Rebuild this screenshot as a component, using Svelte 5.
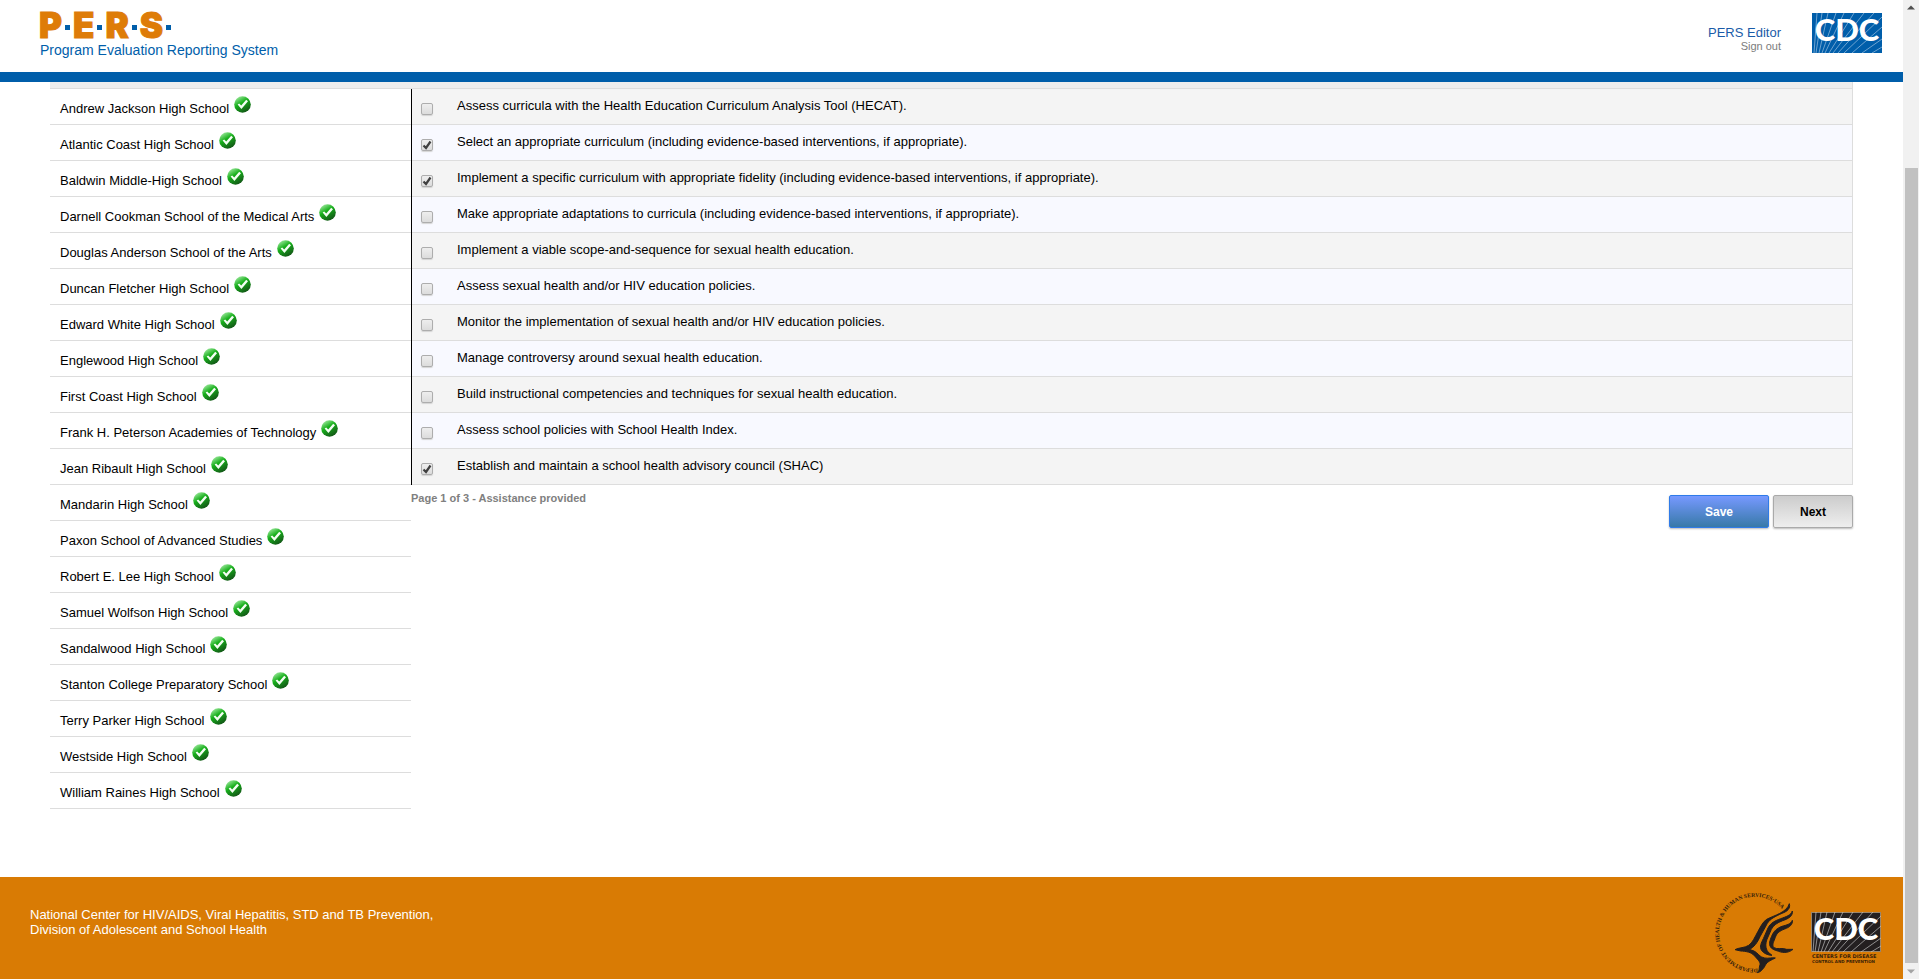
<script>
  const schools = [
    'Andrew Jackson High School', 'Atlantic Coast High School', 'Baldwin Middle-High School',
    'Darnell Cookman School of the Medical Arts', 'Douglas Anderson School of the Arts',
    'Duncan Fletcher High School', 'Edward White High School', 'Englewood High School',
    'First Coast High School', 'Frank H. Peterson Academies of Technology',
    'Jean Ribault High School', 'Mandarin High School', 'Paxon School of Advanced Studies',
    'Robert E. Lee High School', 'Samuel Wolfson High School', 'Sandalwood High School',
    'Stanton College Preparatory School', 'Terry Parker High School', 'Westside High School',
    'William Raines High School'
  ];
  let items = $state([
    { text: 'Assess curricula with the Health Education Curriculum Analysis Tool (HECAT).', done: false },
    { text: 'Select an appropriate curriculum (including evidence-based interventions, if appropriate).', done: true },
    { text: 'Implement a specific curriculum with appropriate fidelity (including evidence-based interventions, if appropriate).', done: true },
    { text: 'Make appropriate adaptations to curricula (including evidence-based interventions, if appropriate).', done: false },
    { text: 'Implement a viable scope-and-sequence for sexual health education.', done: false },
    { text: 'Assess sexual health and/or HIV education policies.', done: false },
    { text: 'Monitor the implementation of sexual health and/or HIV education policies.', done: false },
    { text: 'Manage controversy around sexual health education.', done: false },
    { text: 'Build instructional competencies and techniques for sexual health education.', done: false },
    { text: 'Assess school policies with School Health Index.', done: false },
    { text: 'Establish and maintain a school health advisory council (SHAC)', done: true }
  ]);
</script>

{#snippet cdcMark(bg, ray)}
  <rect width="70" height="40" fill={bg} />
  <path d="M2 40 5 0M4 40 10 0M7 40 16 0M10 40 24 0M13 40 32 0M17 40 42 0M21 40 52 0M26 40 62 0M32 40 70 4M40 40 70 14M50 40 70 26M60 40 70 34" fill="none" stroke={ray} stroke-width="1" opacity="0.6" />
  <text x="35" y="28" text-anchor="middle" font-family="Lato, sans-serif" font-weight="900" font-size="31" fill="#fff">CDC</text>
{/snippet}

<svg class="defs" aria-hidden="true">
  <defs>
    <linearGradient id="ball" x1="0.2" y1="0" x2="0.8" y2="1">
      <stop offset="0" stop-color="#a6eda6" /><stop offset=".4" stop-color="#18b01c" /><stop offset="1" stop-color="#124a16" />
    </linearGradient>
    <symbol id="done" viewBox="0 0 17 17">
      <circle cx="8.5" cy="8.5" r="8.3" fill="url(#ball)" />
      <path d="M3.600 8.600 5.200 7.400 7.200 9.600 12.200 3.800 14 5.200 7.400 13Z" fill="#f4fff4" />
    </symbol>
  </defs>
</svg>

<div class="window">
  <div class="page">
    <header>
      <div class="brand">
        <div class="logo"><span>P</span><i></i><span>E</span><i></i><span>R</span><i></i><span>S</span><i></i></div>
        <div class="tag">Program Evaluation Reporting System</div>
      </div>
      <div class="account">
        <nav><a class="user" href="#account">PERS Editor</a><a class="out" href="#signout">Sign out</a></nav>
        <svg class="cdc" viewBox="0 0 70 40" role="img" aria-label="CDC">{@render cdcMark('#005eaa', '#b5d0ea')}</svg>
      </div>
    </header>
    <main>
      <div class="strip"></div>
      <div class="cols">
        <ul>
          {#each schools as school}
            <li><a href="#school">{school}</a><svg class="tick" aria-hidden="true"><use href="#done" /></svg></li>
          {/each}
        </ul>
        <form onsubmit={(e) => e.preventDefault()}>
          <div class="list">
            {#each items as item}
              <label><input type="checkbox" bind:checked={item.done} /><span>{item.text}</span></label>
            {/each}
          </div>
          <div class="below">
            <p>Page 1 of 3 - Assistance provided</p>
            <div class="buttons"><button class="save">Save</button><button class="next">Next</button></div>
          </div>
        </form>
      </div>
    </main>
    <footer>
      <p>National Center for HIV/AIDS, Viral Hepatitis, STD and TB Prevention,<br />Division of Adolescent and School Health</p>
      <div class="seals">
        <svg class="hhs" viewBox="54 48 270 276" role="img" aria-label="Department of Health and Human Services USA">
          <path id="ring" d="M203 296A108 108 0 1 1 303 188" fill="none" />
          <text font-family="Liberation Serif, serif" font-weight="700" font-size="17" fill="#33200c"><textPath href="#ring">DEPARTMENT OF HEALTH &amp; HUMAN SERVICES·USA</textPath></text>
          <g fill="#231f20" stroke="#231f20" stroke-width="3" stroke-linejoin="round">
            <path d="M298 101C302 116 292 124 276 130C256 139 240 147 232 160L210 200C202 218 192 232 178 238L192 243C204 248 208 262 224 264C236 266 246 262 256 264C244 270 234 274 228 282C222 294 214 306 202 308C210 302 206 294 210 284C212 276 202 268 194 258C184 246 168 244 152 243L135 239C148 232 164 234 176 226C188 218 194 202 204 184C212 170 218 156 230 148C252 136 290 128 298 101Z" />
            <path d="M307 123C309 138 296 146 278 152C262 158 250 166 244 178L231 208C226 222 226 234 234 246L246 256C234 256 220 250 214 240C208 230 214 218 220 206L234 174C242 158 256 152 272 146C288 140 303 136 307 123Z" />
            <path d="M307 151C309 164 298 172 284 177C268 183 260 190 256 202C252 214 246 222 250 232C262 240 276 232 290 238L309 238C298 248 280 250 266 244C254 240 244 238 240 228C236 218 242 206 246 196C252 182 262 174 276 169C290 165 303 162 307 151Z" />
          </g>
        </svg>
        <svg class="cdc-foot" viewBox="0 0 70 52" role="img" aria-label="CDC, Centers for Disease Control and Prevention">
          {@render cdcMark('#231f20', '#d8d8d8')}
          <rect x="0.5" y="0.5" width="69" height="39" fill="none" stroke="#e8c9a0" stroke-width="1" opacity="0.6" />
          <g font-family="DejaVu Sans, sans-serif" font-weight="700" fill="#3a2106">
            <text x="1" y="46" font-size="5">CENTERS FOR DISEASE</text>
            <text x="1" y="51" font-size="4">CONTROL AND PREVENTION</text>
          </g>
        </svg>
      </div>
    </footer>
  </div>
  <div class="scroll" aria-hidden="true">
    <svg viewBox="0 0 16 16"><path d="M4 9.500 8 5.500 12 9.500Z" fill="#505050" /></svg>
    <div class="track"><div class="thumb"></div></div>
    <svg viewBox="0 0 16 16"><path d="M4 6.500 8 10.500 12 6.500Z" fill="#a3a3a3" /></svg>
  </div>
</div>

<style>
  :global(body) { margin: 0; background: #fff; }
  .defs { position: absolute; width: 0; height: 0; }
  .window { display: flex; min-height: 100vh; font: 13px/15px "Liberation Sans", Arial, sans-serif; color: #000; }
  .page { flex: 1; min-width: 0; display: flex; flex-direction: column; }
  a { color: inherit; text-decoration: none; }

  header { display: flex; justify-content: space-between; height: 72px; border-bottom: 10px solid #005eaa; padding: 0 21px 0 40px; }
  .brand { padding-top: 10px; }
  .logo { display: flex; align-items: center; gap: 3px; height: 30px; font: 900 35px/30px Inter, sans-serif; color: #de7c08; }
  .logo span { -webkit-text-stroke: 1px #de7c08; }
  .logo span:first-child { margin-left: -1px; }
  .logo i { width: 5px; height: 5px; margin-top: 4px; background: #005eaa; }
  .tag { margin-top: 2px; color: #005eaa; font-size: 14px; line-height: 16px; }
  .account { display: flex; gap: 31px; align-items: flex-start; padding-top: 13px; }
  nav { display: flex; flex-direction: column; align-items: flex-end; padding-top: 12px; }
  .user { color: #1a5ba8; }
  .out { font-size: 11px; line-height: 13px; color: #7c7c7c; }
  .cdc { width: 70px; height: 40px; }

  main { flex: 1; padding: 0 50px; }
  .strip { height: 6px; background: #eee; border-right: 1px solid #ddd; border-bottom: 1px solid #ddd; }
  .cols { display: flex; }
  ul { list-style: none; margin: 0; padding: 0; width: 361px; }
  li { box-sizing: border-box; height: 36px; border-bottom: 1px solid #ddd; padding: 7px 0 0 10px; display: flex; align-items: flex-start; gap: 5px; }
  li a { padding-top: 5px; }
  .tick { width: 17px; height: 17px; }

  form { flex: 1; min-width: 0; }
  .list { border-left: 1px solid #000; }
  label { box-sizing: border-box; height: 36px; display: flex; align-items: flex-start; gap: 24px; padding-left: 9px; background: #f4f4f4; border-right: 1px solid #ddd; border-bottom: 1px solid #ddd; }
  label:nth-child(even) { background: #f8f9ff; }
  label span { padding-top: 9px; }
  input { appearance: none; box-sizing: border-box; width: 12px; height: 12px; margin: 14px 0 0; border: 1px solid #adadad; border-radius: 2px; background: linear-gradient(#eee, #dcdcdc); box-shadow: 0 1px 1px #d4d4d4; }
  input:checked { background: url("data:image/svg+xml,%3Csvg xmlns='http://www.w3.org/2000/svg' viewBox='0 0 10 10'%3E%3Cpath d='M1.500 5.500 4 8 8.500 1.500' fill='none' stroke='%23404040' stroke-width='2.200'/%3E%3C/svg%3E") center / 10px 10px no-repeat, linear-gradient(#eee, #dcdcdc); }

  .below { display: flex; justify-content: space-between; }
  .below p { margin: 6px 0 0; font-size: 11px; font-weight: 700; color: #808080; }
  .buttons { display: flex; gap: 4px; padding-top: 10px; }
  button { height: 33px; padding: 1px 0 0; border-radius: 2px; font: 700 12px/15px "Liberation Sans", Arial, sans-serif; box-shadow: 0 1px 2px #bbb; }
  .save { width: 100px; color: #fff; border: 1px solid #2f7be8; background: linear-gradient(#7799ff, #3779a8); }
  .next { width: 80px; color: #000; border: 1px solid #aaa; background: linear-gradient(#ccc, #eee); }

  footer { display: flex; justify-content: space-between; background: #d97b04; color: #fff; height: 102px; padding: 0 22px 0 30px; }
  footer p { margin: 30px 0 0; }
  .seals { display: flex; gap: 13px; }
  .hhs { width: 90px; height: 92px; margin-top: 9px; }
  .cdc-foot { width: 70px; height: 52px; margin-top: 35px; }

  .scroll { width: 16px; display: flex; flex-direction: column; background: #f1f1f1; }
  .scroll svg { width: 16px; height: 16px; }
  .track { flex: 1; display: flex; flex-direction: column; justify-content: flex-end; padding: 0 1px 0 2px; }
  .thumb { height: 84%; background: #c1c1c1; }
</style>
